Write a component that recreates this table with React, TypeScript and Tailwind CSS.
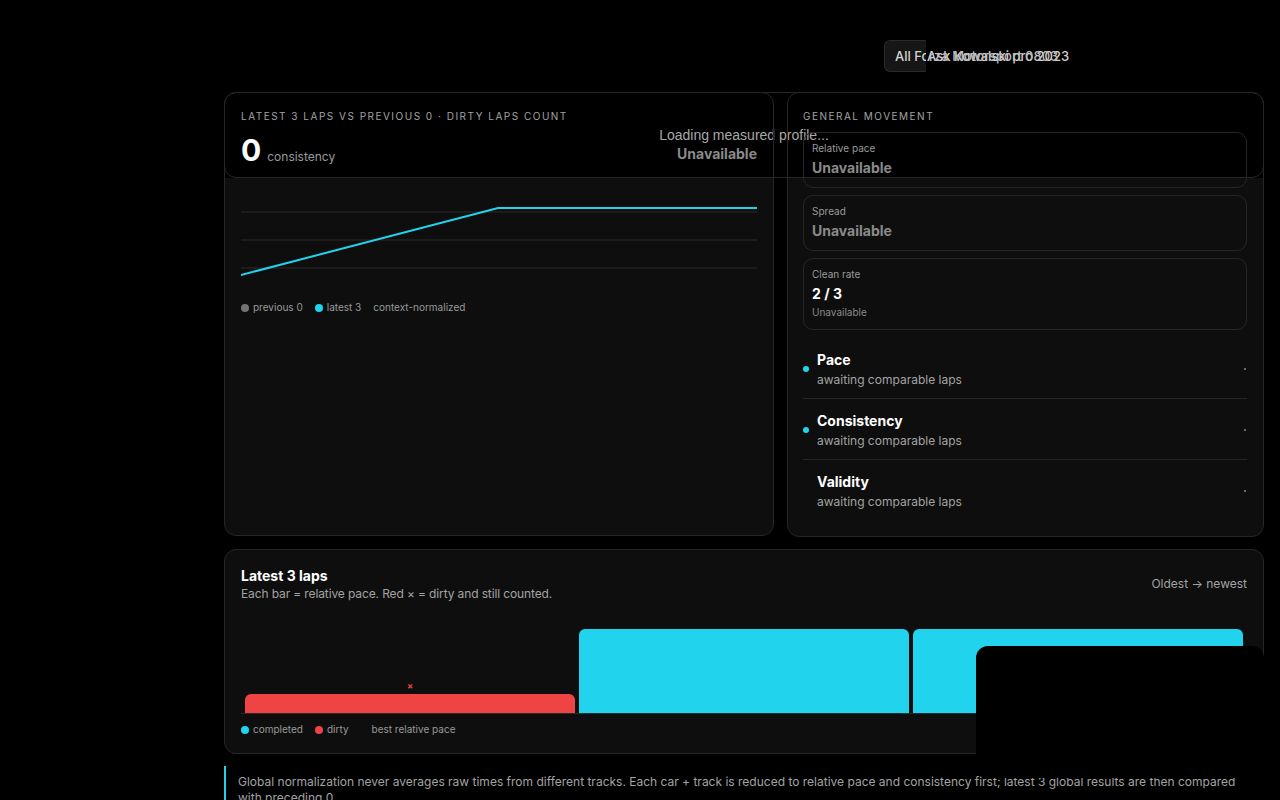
const line = "border-[#262626]";

function Legend({ items }: { items: { color?: string; label: string; gap?: boolean }[] }) {
  return (
    <div className="flex items-center gap-3 text-[10px] leading-[15px] text-[#9a9a9a]">
      {items.map((it) => (
        <span key={it.label} className={`flex items-center gap-1 ${it.gap ? "ml-[11px]" : ""}`}>
          {it.color && <span className={`h-2 w-2 rounded-full ${it.color}`} />}
          {it.label}
        </span>
      ))}
    </div>
  );
}

function Metric({ label, value, note, strong }: { label: string; value: string; note?: string; strong?: boolean }) {
  return (
    <div className={`rounded-[10px] border ${line} px-2 pt-2 pb-[9px]`}>
      <div className="text-[10px] leading-[15px] text-[#9a9a9a]">{label}</div>
      <div className={`mt-0.5 text-sm font-bold leading-5 ${strong ? "text-white" : "text-[#8a8a8a]"}`}>{value}</div>
      {note && <div className="mt-px text-[10px] leading-[15px] text-[#8a8a8a]">{note}</div>}
    </div>
  );
}

function Row({ title, dot, last }: { title: string; dot: boolean; last?: boolean }) {
  return (
    <div className={`flex items-center gap-2 pt-3 pb-2.5 ${last ? "" : `border-b ${line}`}`}>
      <span className={`h-1.5 w-1.5 rounded-full ${dot ? "bg-[#22d3ee]" : "bg-transparent"}`} />
      <div className="flex-1">
        <div className="text-sm font-bold leading-5 text-white">{title}</div>
        <div className="mt-0.5 text-xs leading-4 text-[#a3a3a3]">awaiting comparable laps</div>
      </div>
      <span className="mr-px h-[2px] w-[2px] rounded-full bg-[#8a8a8a]" />
    </div>
  );
}

export default function App() {
  const laps = [
    { h: 19, dirty: true },
    { h: 84, dirty: false },
    { h: 84, dirty: false },
  ];

  return (
    <div className="relative min-h-screen overflow-hidden bg-black font-['Inter',sans-serif] text-white">
      <div className="ml-[224px] w-[1040px] pt-10">
        {/* source picker, its labels spill over each other */}
        <div className="relative ml-[660px] h-8">
          <div className="h-8 w-[42px] overflow-hidden rounded-l-md border border-r-0 border-[#2a2a2a] bg-[#161616] pl-[10px] text-[13px] font-medium leading-[30px] whitespace-nowrap text-[#d4d4d4]">
            All Forza Motorsport 2023
          </div>
          <span className="absolute top-0 left-[43px] text-[13px] font-medium leading-8 whitespace-nowrap text-[#cfcfcf]">Ask Kowalski pro 2023</span>
          <span className="absolute top-0 left-[45px] text-[13px] font-medium leading-8 whitespace-nowrap text-[#bdbdbd]">rza Motorsport 0803</span>
        </div>

        <div className="relative mt-5 grid grid-cols-[550px_1fr] gap-[13px]">
          <div className={`absolute inset-x-0 top-0 flex h-[86px] items-center justify-center rounded-xl border ${line} bg-black font-['Liberation_Sans',sans-serif] text-sm text-[#a8a8a8]`}>
            Loading measured profile...
          </div>

          {/* lap comparison */}
          <section className={`relative z-10 flex h-[444px] flex-col rounded-xl border ${line} bg-[linear-gradient(to_bottom,transparent_85px,#0e0e0e_85px)] p-4`}>
            <div className="text-[10px] leading-[15px] tracking-[0.15em] text-[#a3a3a3]">LATEST 3 LAPS VS PREVIOUS 0 · DIRTY LAPS COUNT</div>
            <div className="mt-2 flex items-end justify-between">
              <div className="flex items-baseline gap-1.5">
                <span className="text-3xl leading-9 font-bold">0</span>
                <span className="text-xs text-[#9a9a9a]">consistency</span>
              </div>
              <span className="mb-1 text-sm font-bold text-[#8a8a8a]">Unavailable</span>
            </div>
            <svg className="mt-7" width="516" height="88" viewBox="0 0 516 88">
              {[16, 44, 72].map((y) => (
                <line key={y} x1="0" x2="516" y1={y} y2={y} stroke="#222" strokeWidth="1.5" />
              ))}
              <polyline points="0,79 257,12 516,12" fill="none" stroke="#22d3ee" strokeWidth="2" />
            </svg>
            <div className="mt-4">
              <Legend items={[{ color: "bg-[#737373]", label: "previous 0" }, { color: "bg-[#22d3ee]", label: "latest 3" }, { label: "context-normalized" }]} />
            </div>
          </section>

          {/* general movement */}
          <section className={`relative z-10 rounded-xl border ${line} bg-[linear-gradient(to_bottom,transparent_85px,#0e0e0e_85px)] p-4 pl-[15px]`}>
            <div className="text-[10px] leading-[15px] tracking-[0.15em] text-[#a3a3a3]">GENERAL MOVEMENT</div>
            <div className="mt-2 flex flex-col gap-[7px]">
              <Metric label="Relative pace" value="Unavailable" />
              <Metric label="Spread" value="Unavailable" />
              <Metric label="Clean rate" value="2 / 3" note="Unavailable" strong />
            </div>
            <div className="mt-2">
              <Row title="Pace" dot />
              <Row title="Consistency" dot />
              <Row title="Validity" dot={false} last />
            </div>
          </section>
        </div>

        {/* latest laps bars */}
        <section className={`mt-3 rounded-xl border ${line} bg-[#0e0e0e] px-4 pt-4 pb-4`}>
          <div className="flex items-center justify-between">
            <div>
              <div className="text-sm font-bold leading-5">Latest 3 laps</div>
              <div className="text-xs leading-4 tracking-[-0.01em] text-[#a3a3a3]">Each bar = relative pace. Red × = dirty and still counted.</div>
            </div>
            <span className="text-xs text-[#a3a3a3]">Oldest → newest</span>
          </div>
          <div className="mt-4 flex h-[96px] items-end gap-1 border-b border-[#2a2a2a] px-1">
            {laps.map((lap, i) => (
              <div key={i} className="relative flex-1">
                {lap.dirty && (
                  <span className="absolute -top-[13px] left-1/2 -translate-x-1/2 text-[9px] leading-[10px] font-bold text-[#ef4444]">×</span>
                )}
                <div
                  className={`rounded-t-md ${lap.dirty ? "bg-[#ef4444]" : "bg-[#22d3ee]"}`}
                  style={{ height: lap.h }}
                />
              </div>
            ))}
          </div>
          <div className="mt-2">
            <Legend items={[{ color: "bg-[#22d3ee]", label: "completed" }, { color: "bg-[#ef4444]", label: "dirty" }, { label: "best relative pace", gap: true }]} />
          </div>
        </section>

        <p className="mt-3 border-l-2 border-[#22d3ee] py-2 pr-2 pl-3 text-xs leading-4 text-[#a3a3a3]">
          Global normalization never averages raw times from different tracks. Each car + track is reduced to relative pace and consistency first; latest 3 global results are then compared with preceding 0.
        </p>
      </div>

      {/* floating panel covering the corner */}
      <div className="absolute top-[646px] left-[976px] h-[132px] w-[288px] rounded-xl bg-black" />
    </div>
  );
}
